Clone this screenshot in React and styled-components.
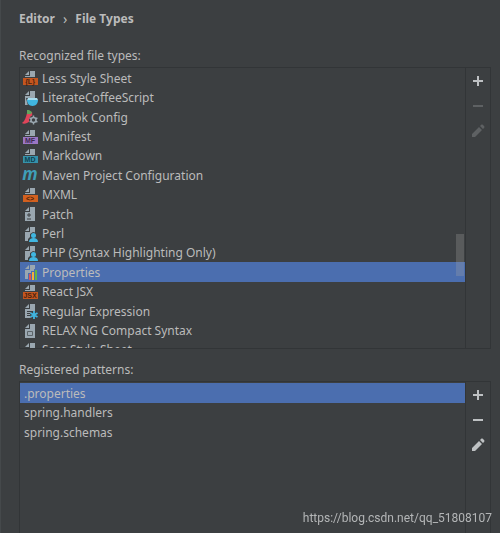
import { useState } from "react";
import styled, { createGlobalStyle } from "styled-components";

const fileTypes = [
  { name: "Less Style Sheet", icon: "less" },
  { name: "LiterateCoffeeScript", icon: "coffee" },
  { name: "Lombok Config", icon: "lombok" },
  { name: "Manifest", icon: "manifest" },
  { name: "Markdown", icon: "markdown" },
  { name: "Maven Project Configuration", icon: "maven" },
  { name: "MXML", icon: "mxml" },
  { name: "Patch", icon: "patch" },
  { name: "Perl", icon: "user" },
  { name: "PHP (Syntax Highlighting Only)", icon: "user" },
  { name: "Properties", icon: "properties" },
  { name: "React JSX", icon: "jsx" },
  { name: "Regular Expression", icon: "regexp" },
  { name: "RELAX NG Compact Syntax", icon: "relax" },
  { name: "Sass Style Sheet", icon: "sass" },
];

const patterns = [".properties", "spring.handlers", "spring.schemas"];

// label and colours of the icons that carry a coloured band
const bands = {
  less: { label: "{L}", fill: "#c4561f", ink: "#4a2410" },
  manifest: { label: "MF", fill: "#9b76c4", ink: "#3b2b50" },
  markdown: { label: "MD", fill: "#3592ab", ink: "#12414f" },
  mxml: { label: "<>", fill: "#d2601f", ink: "#4f2209" },
  jsx: { label: "JSX", fill: "#c4561f", ink: "#4a2410" },
  sass: { fill: "#b8517a" },
};

const Page = ({ short }) => (
  <g fill="#9aa7b0">
    <path d="M7 1L3 5h4z" />
    <path d={short ? "M8 1v5H3v1h10V1z" : "M8 1v5H3v9h10V1z"} />
  </g>
);

const TypeIcon = ({ type }) => {
  const band = bands[type];

  if (band) {
    return (
      <Icon viewBox="0 0 16 16" aria-hidden="true">
        <Page short />
        <rect x="1" y="8" width="15" height="7" fill={band.fill} />
        {band.label && (
          <BandText x="8" y="14" fill={band.ink}>
            {band.label}
          </BandText>
        )}
      </Icon>
    );
  }

  if (type === "maven") {
    return (
      <Icon viewBox="0 0 16 16" aria-hidden="true">
        <MavenText x="8" y="13">
          m
        </MavenText>
      </Icon>
    );
  }

  if (type === "lombok") {
    return (
      <Icon viewBox="0 0 16 16" aria-hidden="true">
        <path d="M5 4l5-1c1 5-1 9-5 11-2 1-4 1-5 0 3-2 4-6 5-10z" fill="#e0455a" />
        <path d="M5 1l2 0 3 2-1 2-4 0z" fill="#62a35c" />
        <circle cx="11.500" cy="11" r="4.500" fill="#3c3f41" />
        <circle cx="11.500" cy="11" r="2.500" fill="none" stroke="#9aa7b0" strokeWidth="1.500" />
        <path
          d="M11.500 6.500v2M11.500 13.500v2M7.600 8.800l1.700 1M13.700 12.200l1.700 1M7.600 13.200l1.700-1M13.700 9.800l1.700-1"
          stroke="#9aa7b0"
          strokeWidth="1.500"
        />
      </Icon>
    );
  }

  return (
    <Icon viewBox="0 0 16 16" aria-hidden="true">
      <Page />
      {type === "coffee" && (
        <>
          <path d="M4 8h12v8H6z" fill="#3c3f41" />
          <path d="M5 10h11c0 3-2 6-5.500 6S5 13 5 10z" fill="#40b6e0" />
          <path d="M6 8h9l1 2H5z" fill="#a6dcee" />
        </>
      )}
      {type === "patch" && (
        <path d="M7 7v4M5 9h4M5 13h4" stroke="#3c3f41" />
      )}
      {type === "user" && (
        <>
          <path d="M6 16v-3l2-2V8l3-2 4 1v9z" fill="#3c3f41" />
          <circle cx="11.500" cy="9.500" r="2.500" fill="#40b6e0" />
          <path d="M7 16c0-3 2-4 4.500-4s4.500 1 4.500 4z" fill="#40b6e0" />
        </>
      )}
      {type === "properties" && (
        <>
          <path d="M6 16V9h3V7h3V5h4v11z" fill="#4b6eaf" />
          <path d="M7 10h2v6H7z" fill="#e05555" />
          <path d="M10 8h2v8h-2z" fill="#f4af3d" />
          <path d="M13 6h2v10h-2z" fill="#62b543" />
        </>
      )}
      {type === "regexp" && (
        <>
          <path d="M5 8.500h6M5 10.500h4M5 12.500h3" stroke="#3c3f41" />
          <circle cx="12" cy="12" r="4" fill="#3c3f41" />
          <path
            d="M12 8v8M8.500 10l7 4M15.500 10l-7 4"
            stroke="#40b6e0"
            strokeWidth="1.800"
          />
        </>
      )}
      {type === "relax" && (
        <path d="M5.500 8.500h5v4h-5z" fill="none" stroke="#5c6468" />
      )}
    </Icon>
  );
};

const Toolbar = ({ label, editable }) => (
  <Tools role="toolbar" aria-label={label}>
    <ToolButton aria-label="Add">
      <Icon viewBox="0 0 16 16">
        <path d="M8 3v10M3 8h10" stroke="currentColor" strokeWidth="2" />
      </Icon>
    </ToolButton>
    <ToolButton aria-label="Remove" disabled={!editable}>
      <Icon viewBox="0 0 16 16">
        <path d="M3 8h10" stroke="currentColor" strokeWidth="2" />
      </Icon>
    </ToolButton>
    <ToolButton aria-label="Edit" disabled={!editable}>
      <Icon viewBox="0 0 16 16">
        <path
          d="M2 11l7-7 3 3-7 7H2zM10 3l1-1c.6-.6 1.400-.6 2 0l1 1c.6.6.6 1.400 0 2l-1 1z"
          fill="currentColor"
        />
      </Icon>
    </ToolButton>
  </Tools>
);

const App = () => {
  const [selectedType, setSelectedType] = useState("Properties");
  const [selectedPattern, setSelectedPattern] = useState(".properties");

  return (
    <Wrapper>
      <GlobalStyle />
      <Breadcrumb aria-label="Breadcrumb">
        <Crumb href="#editor">Editor</Crumb>
        <Separator>›</Separator>
        <Crumb href="#file-types">File Types</Crumb>
      </Breadcrumb>

      <Title id="types">Recognized file types:</Title>
      <Panel>
        <ScrollArea>
          <List $scrolled role="listbox" aria-labelledby="types">
            {fileTypes.map(({ name, icon }) => (
              <Row
                key={name}
                role="option"
                aria-selected={name === selectedType}
                $selected={name === selectedType}
                $hasIcon
                onClick={() => setSelectedType(name)}
              >
                <TypeIcon type={icon} />
                {name}
              </Row>
            ))}
          </List>
          <Thumb />
        </ScrollArea>
        <Toolbar label="File types" />
      </Panel>

      <Title id="patterns">Registered patterns:</Title>
      <Panel $open>
        <ScrollArea>
          <List role="listbox" aria-labelledby="patterns">
            {patterns.map((name) => (
              <Row
                key={name}
                role="option"
                aria-selected={name === selectedPattern}
                $selected={name === selectedPattern}
                onClick={() => setSelectedPattern(name)}
              >
                {name}
              </Row>
            ))}
          </List>
        </ScrollArea>
        <Toolbar label="Patterns" editable />
      </Panel>
      <Watermark>https://blog.csdn.net/qq_51808107</Watermark>
    </Wrapper>
  );
};

const GlobalStyle = createGlobalStyle`
  * {
    box-sizing: border-box;
  }

  body {
    margin: 0;
    background-color: #3c3f41;
    color: #bbbbbb;
    font-family: "Noto Sans", "Open Sans", sans-serif;
    font-size: 12px;
  }
`;

const Wrapper = styled.main`
  display: flex;
  flex-direction: column;
  min-height: 100vh;
  padding: 8px 9px 0 18px;
  border-left: 1px solid #45494b;
`;

const Breadcrumb = styled.nav`
  display: flex;
  align-items: center;
  gap: 8px;
  height: 20px;
  margin-bottom: 18px;
`;

const Crumb = styled.a`
  color: inherit;
  font-weight: 700;
  text-decoration: none;
`;

const Separator = styled.span`
  font-size: 14px;
`;

const Title = styled.h2`
  margin: 0;
  font-size: 12px;
  font-weight: 400;
  line-height: 20px;
  padding-bottom: 1px;
`;

const Panel = styled.section`
  display: flex;
  flex: ${({ $open }) => ($open ? "1" : "none")};
  border: 1px solid #323537;
  border-bottom-width: ${({ $open }) => ($open ? "0" : "1px")};
  margin-bottom: ${({ $open }) => ($open ? "0" : "11px")};
`;

const ScrollArea = styled.div`
  position: relative;
  flex: 1;
  min-width: 0;
`;

const List = styled.ul`
  height: ${({ $scrolled }) => ($scrolled ? "280px" : "auto")};
  margin: 0;
  padding: ${({ $scrolled }) => ($scrolled ? "0" : "1px 0 0")};
  overflow: hidden;
  list-style: none;
`;

const Row = styled.li`
  display: flex;
  align-items: center;
  gap: 4px;
  height: 19px;
  padding-left: ${({ $hasIcon }) => ($hasIcon ? "2px" : "4px")};
  background-color: ${({ $selected }) => ($selected ? "#4b6eaf" : "transparent")};
  white-space: nowrap;
  cursor: default;

  &:nth-child(5n + 1),
  &:nth-child(5n + 3) {
    height: 20px;
  }
`;

const Thumb = styled.div`
  position: absolute;
  top: 166px;
  right: 1px;
  width: 8px;
  height: 42px;
  background-color: rgba(166, 166, 166, 0.28);
`;

const Tools = styled.div`
  display: flex;
  flex-direction: column;
  width: 25px;
  border-left: 1px solid #323537;
`;

const ToolButton = styled.button`
  display: flex;
  justify-content: center;
  align-items: center;
  height: 25px;
  padding: 0;
  border: none;
  background: none;
  color: #bec1c3;

  &:disabled {
    color: #5e6163;
  }
`;

const Icon = styled.svg`
  flex: none;
  width: 16px;
  height: 16px;
  overflow: visible;
`;

const BandText = styled.text`
  font-family: "Liberation Sans", sans-serif;
  font-size: 7px;
  font-weight: 700;
  text-anchor: middle;
`;

const MavenText = styled.text`
  fill: #3f9fb8;
  font-family: "Open Sans", sans-serif;
  font-size: 17px;
  font-style: italic;
  font-weight: 700;
  text-anchor: middle;
`;

const Watermark = styled.div`
  position: fixed;
  right: 8px;
  bottom: 6px;
  color: #b4b6b7;
  font-family: Roboto, "Liberation Sans", sans-serif;
  font-size: 12px;
  line-height: 18px;
`;

export default App;
